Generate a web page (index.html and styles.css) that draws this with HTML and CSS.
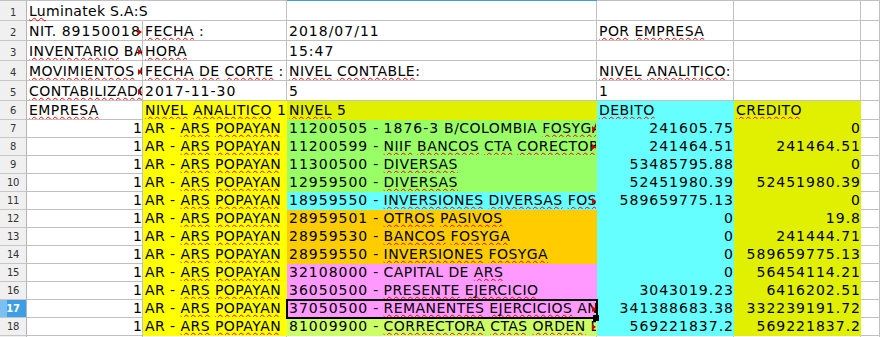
FILE: index.html
```html
<!DOCTYPE html>
<html>
<head>
<meta charset="utf-8">
<link rel="stylesheet" href="styles.css">
</head>
<body>
<div class="sheet">
  <div class="row edge">
    <div></div><div></div><div></div><div class="on"></div><div></div><div></div><div></div>
  </div>

  <div class="row top">
    <div class="h">1</div>
    <div class="c spill"><span class="sp">Lu</span>minatek S.A:S</div>
    <div class="c"></div><div class="c"></div><div class="c"></div><div class="c"></div><div class="c"></div>
  </div>
  <div class="row top">
    <div class="h">2</div>
    <div class="c">NIT. <span class="n">891500182-1</span><i class="more"></i></div>
    <div class="c"><span class="sp">FECHA</span> :</div>
    <div class="c n">2018/07/11</div>
    <div class="c"><span class="sp">POR</span> <span class="sp">EMPRESA</span></div>
    <div class="c"></div><div class="c"></div>
  </div>
  <div class="row top">
    <div class="h">3</div>
    <div class="c"><span class="sp">INVENTARIO</span> BALANCE<i class="more"></i></div>
    <div class="c"><span class="sp">HORA</span></div>
    <div class="c n">15:47</div>
    <div class="c"></div><div class="c"></div><div class="c"></div>
  </div>
  <div class="row top">
    <div class="h">4</div>
    <div class="c"><span class="sp">MOVIMIENTOS</span> CONTABLES<i class="more"></i></div>
    <div class="c"><span class="sp">FECHA</span> <span class="sp">DE</span> <span class="sp">CORTE</span> :</div>
    <div class="c"><span class="sp">NIVEL</span> <span class="sp">CONTABLE</span>:</div>
    <div class="c"><span class="sp">NIVEL</span> <span class="sp">ANALITICO</span>:</div>
    <div class="c"></div><div class="c"></div>
  </div>
  <div class="row top">
    <div class="h">5</div>
    <div class="c"><span class="sp">CONTABILIZADOS</span><i class="more"></i></div>
    <div class="c n">2017-11-30</div>
    <div class="c n">5</div>
    <div class="c n">1</div>
    <div class="c"></div><div class="c"></div>
  </div>

  <div class="row head">
    <div class="h">6</div>
    <div class="c"><span class="sp">EMPRESA</span></div>
    <div class="c yl"><span class="sp">NIVEL</span> <span class="sp">ANALITICO</span> 1</div>
    <div class="c yg"><span class="sp">NIVEL</span> 5</div>
    <div class="c cy"><span class="sp">DEBITO</span></div>
    <div class="c yg"><span class="sp">CREDITO</span></div>
    <div class="c"></div>
  </div>

  <div class="row data">
    <div class="h">7</div>
    <div class="c num"><span>1</span></div>
    <div class="c yl">AR - <span class="sp">ARS</span> <span class="sp">POPAYAN</span></div>
    <div class="c gr"><span class="n">11200505</span> - <span class="n">1876-3</span> B/COLOMBIA <span class="sp">FOSYGA</span><i class="more"></i></div>
    <div class="c num cy"><span>241605.75</span></div>
    <div class="c num yg"><span>0</span></div>
    <div class="c"></div>
  </div>
  <div class="row data">
    <div class="h">8</div>
    <div class="c num"><span>1</span></div>
    <div class="c yl">AR - <span class="sp">ARS</span> <span class="sp">POPAYAN</span></div>
    <div class="c gr"><span class="n">11200599</span> - <span class="sp">NIIF</span> <span class="sp">BANCOS</span> <span class="sp">CTA</span> <span class="sp">CORECTORA</span><i class="more"></i></div>
    <div class="c num cy"><span>241464.51</span></div>
    <div class="c num yg"><span>241464.51</span></div>
    <div class="c"></div>
  </div>
  <div class="row data">
    <div class="h">9</div>
    <div class="c num"><span>1</span></div>
    <div class="c yl">AR - <span class="sp">ARS</span> <span class="sp">POPAYAN</span></div>
    <div class="c gr"><span class="n">11300500</span> - <span class="sp">DIVERSAS</span></div>
    <div class="c num cy"><span>53485795.88</span></div>
    <div class="c num yg"><span>0</span></div>
    <div class="c"></div>
  </div>
  <div class="row data">
    <div class="h">10</div>
    <div class="c num"><span>1</span></div>
    <div class="c yl">AR - <span class="sp">ARS</span> <span class="sp">POPAYAN</span></div>
    <div class="c gr"><span class="n">12959500</span> - <span class="sp">DIVERSAS</span></div>
    <div class="c num cy"><span>52451980.39</span></div>
    <div class="c num yg"><span>52451980.39</span></div>
    <div class="c"></div>
  </div>
  <div class="row data">
    <div class="h">11</div>
    <div class="c num"><span>1</span></div>
    <div class="c yl">AR - <span class="sp">ARS</span> <span class="sp">POPAYAN</span></div>
    <div class="c cy"><span class="n">18959550</span> - <span class="sp">INVERSIONES</span> <span class="sp">DIVERSAS</span> <span class="sp">FOSYGA</span><i class="more"></i></div>
    <div class="c num cy"><span>589659775.13</span></div>
    <div class="c num yg"><span>0</span></div>
    <div class="c"></div>
  </div>
  <div class="row data">
    <div class="h">12</div>
    <div class="c num"><span>1</span></div>
    <div class="c yl">AR - <span class="sp">ARS</span> <span class="sp">POPAYAN</span></div>
    <div class="c or"><span class="n">28959501</span> - <span class="sp">OTROS</span> <span class="sp">PASIVOS</span></div>
    <div class="c num cy"><span>0</span></div>
    <div class="c num yg"><span>19.8</span></div>
    <div class="c"></div>
  </div>
  <div class="row data">
    <div class="h">13</div>
    <div class="c num"><span>1</span></div>
    <div class="c yl">AR - <span class="sp">ARS</span> <span class="sp">POPAYAN</span></div>
    <div class="c or"><span class="n">28959530</span> - <span class="sp">BANCOS</span> <span class="sp">FOSYGA</span></div>
    <div class="c num cy"><span>0</span></div>
    <div class="c num yg"><span>241444.71</span></div>
    <div class="c"></div>
  </div>
  <div class="row data">
    <div class="h">14</div>
    <div class="c num"><span>1</span></div>
    <div class="c yl">AR - <span class="sp">ARS</span> <span class="sp">POPAYAN</span></div>
    <div class="c or"><span class="n">28959550</span> - <span class="sp">INVERSIONES</span> <span class="sp">FOSYGA</span></div>
    <div class="c num cy"><span>0</span></div>
    <div class="c num yg"><span>589659775.13</span></div>
    <div class="c"></div>
  </div>
  <div class="row data">
    <div class="h">15</div>
    <div class="c num"><span>1</span></div>
    <div class="c yl">AR - <span class="sp">ARS</span> <span class="sp">POPAYAN</span></div>
    <div class="c pk"><span class="n">32108000</span> - CAPITAL DE <span class="sp">ARS</span></div>
    <div class="c num cy"><span>0</span></div>
    <div class="c num yg"><span>56454114.21</span></div>
    <div class="c"></div>
  </div>
  <div class="row data">
    <div class="h">16</div>
    <div class="c num"><span>1</span></div>
    <div class="c yl">AR - <span class="sp">ARS</span> <span class="sp">POPAYAN</span></div>
    <div class="c pk"><span class="n">36050500</span> - <span class="sp">PRESENTE</span> <span class="sp">EJERCICIO</span></div>
    <div class="c num cy"><span>3043019.23</span></div>
    <div class="c num yg"><span>6416202.51</span></div>
    <div class="c"></div>
  </div>
  <div class="row data">
    <div class="h cur">17</div>
    <div class="c num"><span>1</span></div>
    <div class="c yl">AR - <span class="sp">ARS</span> <span class="sp">POPAYAN</span></div>
    <div class="c pk sel"><div class="clip"><span class="n">37050500</span> - <span class="sp">REMANENTES</span> <span class="sp">EJERCICIOS</span> ANTERIORES</div><i class="more"></i><i class="frame"><i class="handle"></i></i></div>
    <div class="c num cy"><span>341388683.38</span></div>
    <div class="c num yg"><span>332239191.72</span></div>
    <div class="c"></div>
  </div>
  <div class="row data">
    <div class="h">18</div>
    <div class="c num"><span>1</span></div>
    <div class="c yl">AR - <span class="sp">ARS</span> <span class="sp">POPAYAN</span></div>
    <div class="c lm"><span class="n">81009900</span> - <span class="sp">CORRECTORA</span> <span class="sp">CTAS</span> <span class="sp">ORDEN</span> DEUDORAS<i class="more"></i></div>
    <div class="c num cy"><span>569221837.2</span></div>
    <div class="c num yg"><span>569221837.2</span></div>
    <div class="c"></div>
  </div>
  <div class="row data">
    <div class="h">19</div>
    <div class="c"></div><div class="c"></div><div class="c"></div><div class="c"></div><div class="c"></div><div class="c"></div>
  </div>
</div>
</body>
</html>
```

FILE: styles.css
```css
html, body {
  margin: 0;
  padding: 0;
  background: #ffffff;
}
body {
  width: 880px;
  height: 337px;
  overflow: hidden;
  font-family: "DejaVu Sans", "Liberation Sans", sans-serif;
  font-size: 14px;
  color: #000;
}
.sheet {
  display: flex;
  flex-direction: column;
}
.row {
  display: grid;
  grid-template-columns: 27px 116px 144px 310px 137px 127px 1fr;
  flex: none;
}
.row.edge { height: 1px; }
.row.edge > div { background: #c0c0c0; }
.row.edge > .on { background: #3d9ee6; }
.row.top { height: 20px; }
.row.head { height: 19px; }
.row.data { height: 18px; }

.h {
  box-sizing: border-box;
  background: #f0f0f0;
  border-right: 1px solid #b4b4b4;
  border-bottom: 1px solid #c6c6c6;
  display: flex;
  align-items: center;
  justify-content: center;
  font-size: 10px;
  color: #333;
  letter-spacing: -0.3px;
}
.row.top .h { padding-top: 3px; }
.h.cur {
  background: linear-gradient(to right, #7cc0f2 0 7px, #3d9ee6 7px);
  color: #fff;
  font-weight: bold;
}

.c {
  box-sizing: border-box;
  position: relative;
  overflow: hidden;
  white-space: nowrap;
  line-height: 17px;
  padding: 0 0 0 2px;
  letter-spacing: 0.45px;
  border-right: 1px solid #c0c0c0;
  border-bottom: 1px solid #c0c0c0;
}
.row.top .c { padding-top: 2px; }
.row.head .c { padding-top: 1px; }
.c.spill {
  overflow: visible;
  border-right-color: transparent;
  z-index: 1;
  letter-spacing: 0.3px;
}
.c.n, .c .n { letter-spacing: 1px; }
.c.num {
  text-align: right;
  letter-spacing: 1px;
}
.c.num > span { margin-right: -1px; }

.yl, .yg, .cy, .gr, .or, .pk, .lm { border-color: transparent; }
.yl { background: #ffff00; }
.yg { background: #e0f000; }
.cy { background: #66ffff; }
.gr { background: #99ff66; }
.or { background: #ffcc00; }
.pk { background: #ff99ff; }
.lm { background: #ccff66; }

.sp {
  text-decoration-line: underline;
  text-decoration-style: wavy;
  text-decoration-color: #ff0000;
  text-decoration-thickness: 1.2px;
  text-underline-offset: 1px;
  text-decoration-skip-ink: none;
}

.more {
  position: absolute;
  right: 0;
  bottom: 5px;
  width: 0;
  height: 0;
  border-left: 4px solid #cc0000;
  border-top: 3px solid transparent;
  border-bottom: 3px solid transparent;
}

.c.sel { overflow: visible; }
.clip {
  overflow: hidden;
  white-space: nowrap;
}
.frame {
  position: absolute;
  left: -1px;
  top: -1px;
  right: -2px;
  bottom: -2px;
  border: 2px solid #000;
  z-index: 3;
}
.handle {
  position: absolute;
  right: -3px;
  bottom: -4px;
  width: 6px;
  height: 6px;
  background: #000;
}
```
